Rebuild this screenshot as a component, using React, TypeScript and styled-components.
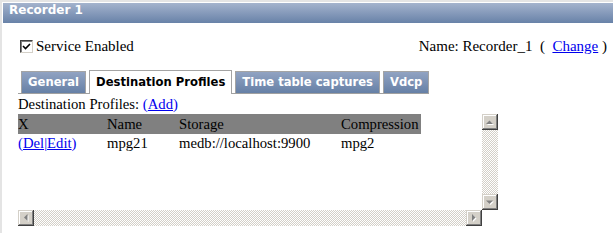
import React from 'react'
import styled, { createGlobalStyle } from 'styled-components'

const GlobalStyle = createGlobalStyle`
  html, body {
    margin: 0;
    padding: 0;
    background: #fff;
  }
  body {
    font-family: 'Liberation Serif', 'Times New Roman', serif;
    font-size: 14.7px;
    color: #000;
  }
`

const Frame = styled.div`
  width: 613px;
  height: 233px;
  box-sizing: border-box;
  border-top: 2px solid #e4e4e4;
  border-left: 2px solid #e4e4e4;
  padding: 1px 0 0 1px;
  overflow: hidden;
`

const TitleBar = styled.div`
  height: 20px;
  line-height: 20px;
  padding-left: 6px;
  background: linear-gradient(#a4b3cd, #6882a8);
  color: #fff;
  font: bold 12px 'DejaVu Sans', Verdana, sans-serif;
`

const Body = styled.div`
  padding: 0 6px 0 15px;
`

const OptionsRow = styled.div`
  display: flex;
  justify-content: space-between;
  align-items: center;
  height: 20px;
  margin-top: 13px;
`

const CheckLabel = styled.label`
  display: flex;
  align-items: center;
  gap: 3px;
  margin-left: 2px;
  font-size: 15px;
`

const CheckBox = styled.span`
  width: 13px;
  height: 13px;
  box-sizing: border-box;
  background: #fff;
  border-style: solid;
  border-width: 1px;
  border-color: #404040 #d4d0c8 #d4d0c8 #404040;
  box-shadow: inset 1px 1px #808080, inset -1px -1px #fff;
  display: flex;
  align-items: center;
  justify-content: center;
`

const NameInfo = styled.span`
  font-size: 15px;
  white-space: pre;
`

const Link = styled.a`
  color: #0000ee;
  text-decoration: underline;
  cursor: pointer;
`

const LinkParen = styled.span`
  color: #0000ee;
`

const TabStrip = styled.div`
  display: inline-flex;
  align-items: flex-end;
  gap: 3px;
  margin-top: 14px;
  padding-left: 3px;
  border-bottom: 1px solid #a0a0a0;
  font: bold 11.6px 'DejaVu Sans', Verdana, sans-serif;
`

const Tab = styled.div<{ $active?: boolean }>`
  box-sizing: border-box;
  padding: 0 6px;
  border: 1px solid #a4a4a4;
  border-bottom: none;
  height: ${(p) => (p.$active ? '24px' : '22px')};
  line-height: ${(p) => (p.$active ? '23px' : '21px')};
  margin-bottom: ${(p) => (p.$active ? '-1px' : '0')};
  background: ${(p) => (p.$active ? '#fff' : 'linear-gradient(#91a3c2, #6680a6)')};
  color: ${(p) => (p.$active ? '#000' : '#fff')};
  white-space: nowrap;
`

const SectionLabel = styled.div`
  line-height: 20px;
`

const ScrollBox = styled.div`
  display: grid;
  grid-template-columns: 464px 16px;
  grid-template-rows: 96px 16px;
  width: 480px;
`

const Viewport = styled.div`
  overflow: hidden;
  background: #fff;
`

const Table = styled.table`
  border-collapse: collapse;
  table-layout: fixed;
  width: 403px;
  font-size: 14.7px;

  td {
    padding: 0;
    white-space: nowrap;
    text-align: left;
    vertical-align: middle;
  }
`

const HeadRow = styled.tr`
  background: #808080;
  height: 20px;
  line-height: 19px;
`

const DataRow = styled.tr`
  height: 18px;
  line-height: 18px;
`

const Track = styled.div<{ $vertical?: boolean }>`
  display: flex;
  flex-direction: ${(p) => (p.$vertical ? 'column' : 'row')};
  background: repeating-conic-gradient(#d4d0c8 0 25%, #fff 0 50%) 0 0 / 2px 2px;
`

const TrackFill = styled.div`
  flex: 1;
`

const ScrollButton = styled.div`
  width: 16px;
  height: 16px;
  flex: none;
  box-sizing: border-box;
  background: #d4d0c8;
  box-shadow: inset -1px -1px #404040, inset 1px 1px #d4d0c8, inset -2px -2px #808080,
    inset 2px 2px #fff;
  display: flex;
  align-items: center;
  justify-content: center;
`

const Corner = styled.div`
  background: #fff;
`

type Dir = 'up' | 'down' | 'left' | 'right'

const arrowPoints: Record<Dir, string> = {
  up: '4,10 11,10 7.5,6.5',
  down: '4,6.5 11,6.5 7.5,10',
  left: '9.5,4 9.5,11 6,7.5',
  right: '6,4 6,11 9.5,7.5',
}

function Arrow({ dir }: { dir: Dir }) {
  return (
    <ScrollButton>
      <svg width="16" height="16" viewBox="0 0 16 16">
        <polygon points={arrowPoints[dir]} fill="#fff" transform="translate(1 1)" />
        <polygon points={arrowPoints[dir]} fill="#808080" />
      </svg>
    </ScrollButton>
  )
}

const profiles = [{ name: 'mpg21', storage: 'medb://localhost:9900', compression: 'mpg2' }]

export default function App() {
  return (
    <>
      <GlobalStyle />
      <Frame>
        <TitleBar>Recorder 1</TitleBar>
        <Body>
          <OptionsRow>
            <CheckLabel>
              <CheckBox>
                <svg width="9" height="9" viewBox="0 0 9 9">
                  <path d="M1 4 L3.5 6.5 L8 2" stroke="#000" strokeWidth="1.6" fill="none" />
                </svg>
              </CheckBox>
              Service Enabled
            </CheckLabel>
            <NameInfo>
              {'Name: Recorder_1  (  '}
              <Link>Change</Link>
              {' )'}
            </NameInfo>
          </OptionsRow>

          <TabStrip>
            <Tab>General</Tab>
            <Tab $active>Destination Profiles</Tab>
            <Tab>Time table captures</Tab>
            <Tab>Vdcp</Tab>
          </TabStrip>

          <SectionLabel>
            Destination Profiles: <LinkParen>(</LinkParen>
            <Link>Add</Link>
            <LinkParen>)</LinkParen>
          </SectionLabel>

          <ScrollBox>
            <Viewport>
              <Table>
                <colgroup>
                  <col style={{ width: 89 }} />
                  <col style={{ width: 72 }} />
                  <col style={{ width: 162 }} />
                  <col style={{ width: 80 }} />
                </colgroup>
                <tbody>
                  <HeadRow>
                    <td>X</td>
                    <td>Name</td>
                    <td>Storage</td>
                    <td>Compression</td>
                  </HeadRow>
                  {profiles.map((p) => (
                    <DataRow key={p.name}>
                      <td>
                        <LinkParen>(</LinkParen>
                        <Link>Del</Link>
                        <LinkParen>|</LinkParen>
                        <Link>Edit</Link>
                        <LinkParen>)</LinkParen>
                      </td>
                      <td>{p.name}</td>
                      <td>{p.storage}</td>
                      <td>{p.compression}</td>
                    </DataRow>
                  ))}
                </tbody>
              </Table>
            </Viewport>
            <Track $vertical>
              <Arrow dir="up" />
              <TrackFill />
              <Arrow dir="down" />
            </Track>
            <Track>
              <Arrow dir="left" />
              <TrackFill />
              <Arrow dir="right" />
            </Track>
            <Corner />
          </ScrollBox>
        </Body>
      </Frame>
    </>
  )
}
